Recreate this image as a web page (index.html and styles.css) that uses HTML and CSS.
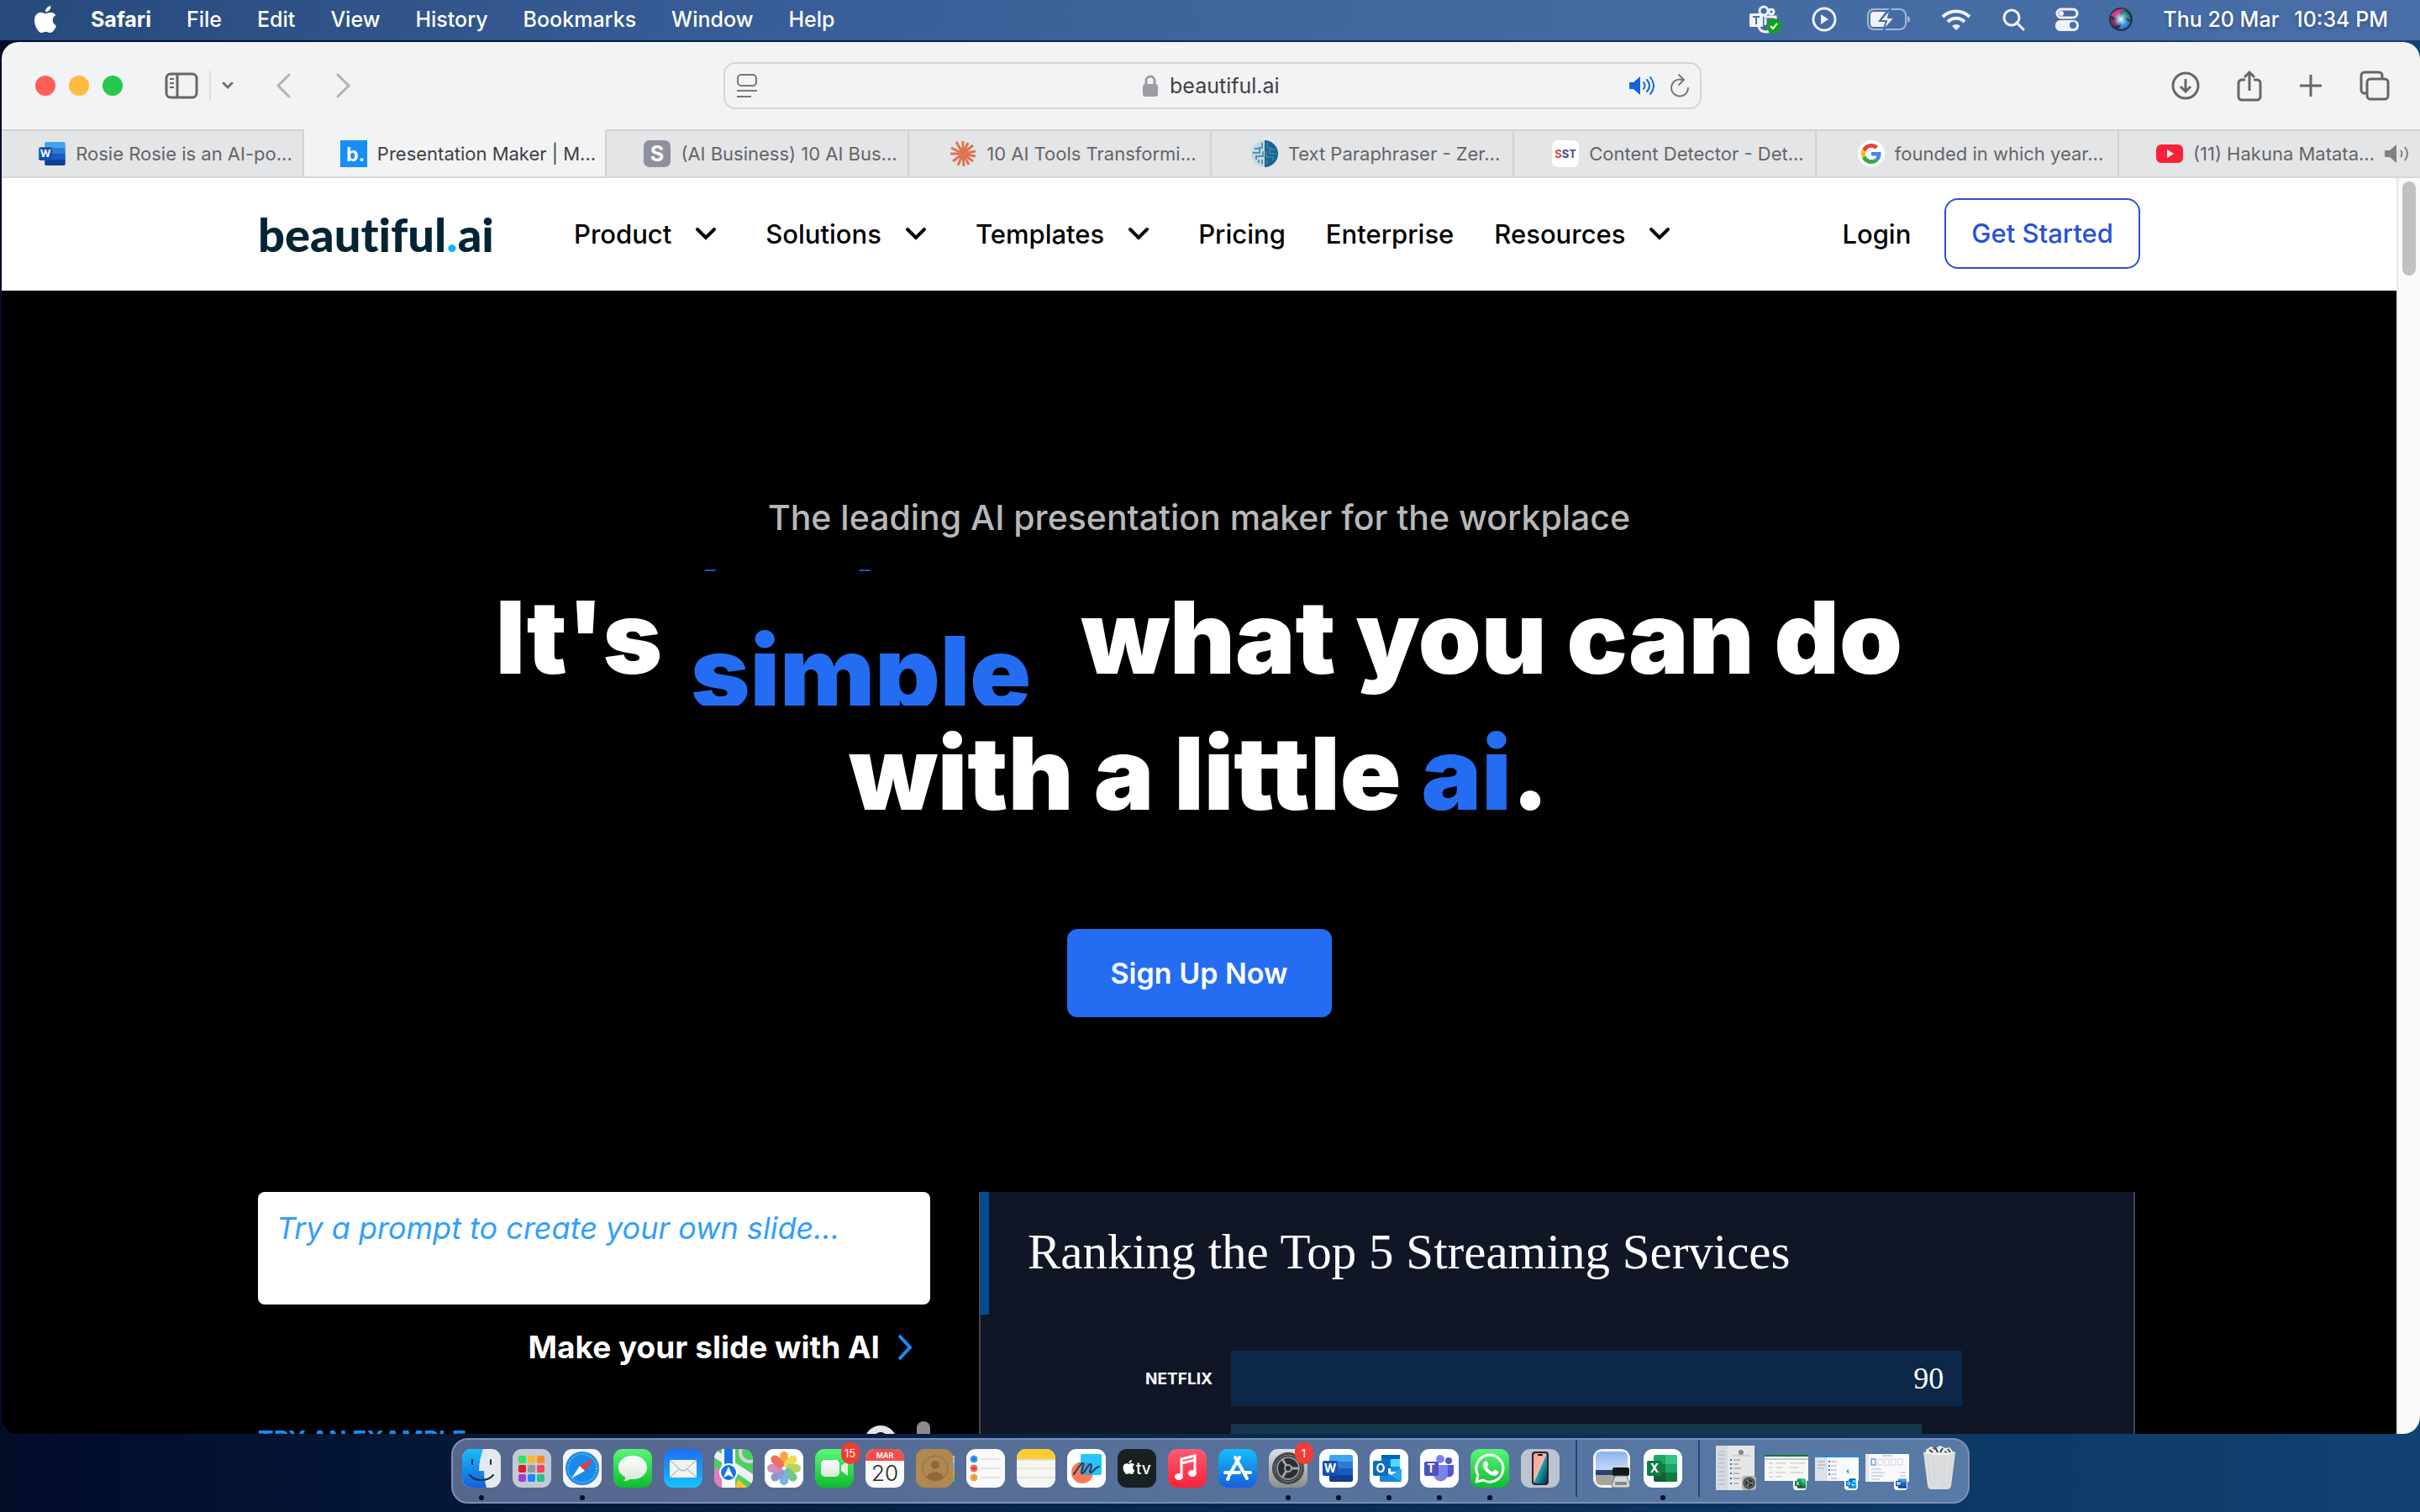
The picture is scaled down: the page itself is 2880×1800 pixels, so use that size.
FILE: index.html
```html
<!DOCTYPE html>
<html lang="en">
<head>
    <meta charset="UTF-8">
    <meta name="viewport" content="width=device-width, initial-scale=1.0">
    <title>Presentation Maker | Beautiful.ai</title>
    <link rel="stylesheet" href="styles.css">
</head>
<body>

    <!-- gradients for the dock icons -->
    <svg class="defs" aria-hidden="true">
        <defs>
            <linearGradient id="gGreen" x1="0" y1="0" x2="0" y2="1"><stop offset="0" stop-color="#5cf67a"/><stop offset="1" stop-color="#0cbd2c"/></linearGradient>
            <linearGradient id="gBlue" x1="0" y1="0" x2="0" y2="1"><stop offset="0" stop-color="#1c6df2"/><stop offset="1" stop-color="#17c3fb"/></linearGradient>
            <linearGradient id="gStore" x1="0" y1="0" x2="0" y2="1"><stop offset="0" stop-color="#16bdfb"/><stop offset="1" stop-color="#1560dc"/></linearGradient>
            <linearGradient id="gRed" x1="0" y1="0" x2="0" y2="1"><stop offset="0" stop-color="#fb5c74"/><stop offset="1" stop-color="#fa2139"/></linearGradient>
            <linearGradient id="gGrey" x1="0" y1="0" x2="0" y2="1"><stop offset="0" stop-color="#d8e2e6"/><stop offset="1" stop-color="#8c8c8c"/></linearGradient>
            <linearGradient id="gWhite" x1="0" y1="0" x2="0" y2="1"><stop offset="0" stop-color="#ffffff"/><stop offset="1" stop-color="#d9e6d9"/></linearGradient>
            <linearGradient id="gPhone" x1="0" y1="0" x2="1" y2="1"><stop offset="0" stop-color="#ff9c95"/><stop offset=".5" stop-color="#f6b8a8"/><stop offset=".51" stop-color="#16a6b8"/><stop offset="1" stop-color="#07303f"/></linearGradient>
            <linearGradient id="gSky" x1="0" y1="0" x2="0" y2="1"><stop offset="0" stop-color="#8cb3f0"/><stop offset="1" stop-color="#c5d8f5"/></linearGradient>
            <radialGradient id="gSiri"><stop offset="0" stop-color="#ffffff"/><stop offset=".3" stop-color="#9fd4f5"/><stop offset="1" stop-color="#9fd4f5" stop-opacity="0"/></radialGradient>
            <clipPath id="tile"><rect width="46" height="46" rx="11"/></clipPath>
        </defs>
    </svg>
    <!-- shared icon shapes -->
    <svg class="symbols" aria-hidden="true">
        <symbol id="apple" viewBox="0 0 24 24"><path d="M12.152 6.896c-.948 0-2.415-1.078-3.96-1.04-2.04.027-3.91 1.183-4.961 3.014-2.117 3.675-.546 9.103 1.519 12.09 1.013 1.454 2.208 3.09 3.792 3.039 1.52-.065 2.09-.987 3.935-.987 1.831 0 2.35.987 3.96.948 1.637-.026 2.676-1.48 3.676-2.948 1.156-1.688 1.636-3.325 1.662-3.415-.039-.013-3.182-1.221-3.22-4.857-.026-3.04 2.48-4.494 2.597-4.559-1.429-2.09-3.623-2.324-4.39-2.376-2-.156-3.675 1.09-4.61 1.09zM15.53 3.83c.843-1.012 1.4-2.427 1.245-3.83-1.207.052-2.662.805-3.532 1.818-.78.896-1.454 2.338-1.273 3.714 1.338.104 2.715-.688 3.559-1.701"/></symbol>
        <symbol id="chevron" viewBox="0 0 26 16"><path d="M3 3l10 10L23 3" fill="none" stroke="#000" stroke-width="4" stroke-linecap="round"/></symbol>
        <symbol id="word" viewBox="0 0 36 32">
            <path d="M10 0h24a2 2 0 0 1 2 2v6H8V2a2 2 0 0 1 2-2z" fill="#41a5ee"/><path d="M8 8h28v8H8z" fill="#2b7cd3"/><path d="M8 16h28v8H8z" fill="#185abd"/><path d="M8 24h28v6a2 2 0 0 1-2 2H10a2 2 0 0 1-2-2z" fill="#103f91"/>
            <rect y="7" width="18" height="18" rx="2" fill="#1450b0"/><text x="9" y="21" class="office-letter">W</text>
        </symbol>
        <symbol id="excel" viewBox="0 0 36 32">
            <path d="M10 0h12v11H8V2a2 2 0 0 1 2-2z" fill="#21a366"/><path d="M22 0h12a2 2 0 0 1 2 2v9H22z" fill="#33c481"/><path d="M8 11h14v10H8z" fill="#107c41"/><path d="M22 11h14v10H22z" fill="#21a366"/><path d="M8 21h28v9a2 2 0 0 1-2 2H10a2 2 0 0 1-2-2z" fill="#185c37"/><path d="M22 21h14v9a2 2 0 0 1-2 2H22z" fill="#107c41"/>
            <rect y="7" width="18" height="18" rx="2" fill="#107c41"/><text x="9" y="21" class="office-letter">X</text>
        </symbol>
        <symbol id="outlook" viewBox="0 0 36 32">
            <path d="M10 0h22v16H10z" fill="#0364b8"/><path d="M10 5h11v9H10z" fill="#0078d4"/><path d="M21 5h11v9H21z" fill="#50d9ff"/><path d="M21 14h11v6H21z" fill="#1490df"/><path d="M8 16l14 8 12-8v14a2 2 0 0 1-2 2H10a2 2 0 0 1-2-2z" fill="#28a8ea"/><path d="M8 17l26 15H10a2 2 0 0 1-2-2z" fill="#1688d4"/>
            <rect y="7" width="18" height="18" rx="2" fill="#0f6cbd"/><text x="9" y="21" class="office-letter">O</text>
        </symbol>
        <symbol id="gear" viewBox="0 0 40 40">
            <circle cx="20" cy="20" r="19" fill="#2b2e30"/><circle cx="20" cy="20" r="16" fill="none" stroke="#8f9496" stroke-width="1"/><circle cx="20" cy="20" r="18" fill="none" stroke="#a2a6a8" stroke-width="1" stroke-dasharray="1 1"/><circle cx="20" cy="20" r="13" fill="none" stroke="#8f9496" stroke-width="2"/><circle cx="20" cy="20" r="4" fill="#2b2e30" stroke="#a2a6a8" stroke-width="2"/><path d="M24 20h9M18 17l-5-8M18 23l-5 8" stroke="#a2a6a8" stroke-width="3"/>
        </symbol>
    </svg>

    <header class="menubar">
        <nav class="menus">
            <svg class="apple" width="32" height="32"><use href="#apple"/></svg>
            <button class="app-name">Safari</button>
            <button>File</button>
            <button>Edit</button>
            <button>View</button>
            <button>History</button>
            <button>Bookmarks</button>
            <button>Window</button>
            <button>Help</button>
        </nav>
        <div class="status">
            <svg width="38" height="34" viewBox="0 0 38 34">
                <g fill="none" stroke="#f0f2f7" stroke-width="3"><circle cx="17" cy="7" r="5"/><circle cx="26" cy="8" r="3"/><path d="M17 14h14v8M11 25c1 8 12 9 15 3"/></g>
                <rect y="10" width="16" height="16" rx="1" fill="#f0f2f7"/><path d="M4 14h8M8 14v9" stroke="#496ea8" stroke-width="2"/>
                <path d="M19 16v8" stroke="#f0f2f7" stroke-width="3"/><circle cx="29" cy="25" r="9" fill="#159f1f"/><path d="M25 25l3 3 5-6" fill="none" stroke="#fff" stroke-width="2"/>
            </svg>
            <svg width="30" height="30" viewBox="0 0 30 30"><circle cx="15" cy="15" r="13" fill="none" stroke="#f0f2f7" stroke-width="3"/><path d="M11 9v12l9-6z" fill="#f0f2f7"/></svg>
            <svg width="52" height="28" viewBox="0 0 52 28"><rect x="1" y="2" width="45" height="24" rx="7" fill="none" stroke="#a3b6d5" stroke-width="2"/><path d="M48 10c4 1 4 7 0 8z" fill="#a3b6d5"/><path d="M8 5h14l-8 11h8l-2 7H8a4 4 0 0 1-4-4V9a4 4 0 0 1 4-4z" fill="#f0f2f7"/><path d="M28 1L15 16h8l-4 12 14-16h-8z" fill="#f0f2f7" stroke="#496ea8" stroke-width="2"/></svg>
            <svg width="36" height="26" viewBox="0 0 36 26"><g fill="none" stroke="#f0f2f7" stroke-width="4"><path d="M2 10a23 23 0 0 1 32 0"/><path d="M8 16a14 14 0 0 1 20 0"/></g><path d="M18 26l-5-5a7 7 0 0 1 10 0z" fill="#f0f2f7"/></svg>
            <svg width="28" height="28" viewBox="0 0 28 28"><circle cx="12" cy="12" r="9" fill="none" stroke="#f0f2f7" stroke-width="3"/><path d="M18 18l8 8" stroke="#f0f2f7" stroke-width="3" stroke-linecap="round"/></svg>
            <svg width="28" height="28" viewBox="0 0 28 28"><rect x="2" y="2" width="24" height="10" rx="5" fill="none" stroke="#f0f2f7" stroke-width="3"/><circle cx="7" cy="7" r="3" fill="#f0f2f7"/><rect y="15" width="28" height="13" rx="6" fill="#f0f2f7"/><circle cx="21" cy="21" r="4" fill="#496ea8"/></svg>
            <svg width="28" height="28" viewBox="0 0 28 28"><circle cx="14" cy="14" r="14" fill="#27324f"/><path d="M2 10c3-8 13-10 18-7-8 0-7 8-6 11z" fill="#d23a76"/><path d="M16 3c8 2 10 9 9 13-3-5-8-6-11-2z" fill="#1d8f79"/><path d="M25 17c-2 7-9 10-14 8 4-2 4-7 3-11z" fill="#2a86dc"/><path d="M2 12c2 4 8 4 12 2-1 4-4 9-7 8-4-2-6-6-5-10z" fill="#8d2a58"/><circle cx="14" cy="14" r="9" fill="url(#gSiri)"/></svg>
            <time class="clock"><span>Thu 20 Mar</span><span>10:34 PM</span></time>
        </div>
    </header>

    <main class="window">
        <div class="toolbar">
            <div class="tools-left">
                <div class="lights"><button class="close" aria-label="Close"></button><button class="minimise" aria-label="Minimise"></button><button class="zoom" aria-label="Zoom"></button></div>
                <div class="sidebar-tools">
                    <button aria-label="Sidebar"><svg width="40" height="32" viewBox="0 0 40 32" fill="none" stroke="#656668" stroke-width="3"><rect x="2" y="2" width="36" height="28" rx="5"/><path d="M15 2v28"/><path d="M6 8h5M6 13h5M6 18h5" stroke-width="2"/></svg></button>
                    <span class="divider"></span>
                    <button aria-label="Tab groups"><svg width="14" height="10" viewBox="0 0 14 10"><path d="M2 2l5 5 5-5" fill="none" stroke="#6f7073" stroke-width="3" stroke-linecap="round"/></svg></button>
                </div>
                <div class="history-tools">
                    <button aria-label="Back"><svg width="18" height="30" viewBox="0 0 18 30"><path d="M16 2L3 15l13 13" fill="none" stroke="#b1b3b5" stroke-width="3" stroke-linecap="round"/></svg></button>
                    <button aria-label="Forward"><svg width="18" height="30" viewBox="0 0 18 30"><path d="M2 2l13 13L2 28" fill="none" stroke="#b1b3b5" stroke-width="3" stroke-linecap="round"/></svg></button>
                </div>
            </div>
            <div class="address">
                <svg width="24" height="28" viewBox="0 0 24 28" fill="none" stroke="#77787a"><rect x="1" y="1" width="22" height="13" rx="4" stroke-width="2"/><path d="M0 20h24M0 27h17" stroke-width="2"/></svg>
                <label class="url">
                    <svg width="18" height="26" viewBox="0 0 18 26"><path d="M4 12V7a5 5 0 0 1 10 0v5" fill="none" stroke="#9c9da0" stroke-width="3"/><rect y="11" width="18" height="15" rx="3" fill="#9c9da0"/></svg>
                    <input type="text" value="beautiful.ai" aria-label="Address">
                </label>
                <div class="address-tools">
                    <button aria-label="Mute tab"><svg width="30" height="24" viewBox="0 0 30 24"><path d="M0 8h5l8-7v22l-8-7H0z" fill="#1264d8"/><path d="M17 8q3 4 0 8M21 5q6 7 0 14M25 2q8 10 0 20" fill="none" stroke="#1264d8" stroke-width="2" stroke-linecap="round"/></svg></button>
                    <button aria-label="Reload"><svg width="24" height="28" viewBox="0 0 24 28" fill="none" stroke="#77787a" stroke-width="2" stroke-linecap="round"><path d="M15 7a10 10 0 1 0 7 10M11 1l6 6-6 6"/></svg></button>
                </div>
            </div>
            <div class="tools-right">
                <button aria-label="Downloads"><svg width="34" height="34" viewBox="0 0 34 34" fill="none" stroke="#656668" stroke-width="3"><circle cx="17" cy="17" r="15"/><path d="M17 9v15M11 18l6 6 6-6"/></svg></button>
                <button aria-label="Share"><svg width="30" height="38" viewBox="0 0 30 38" fill="none" stroke="#656668" stroke-width="3"><path d="M10 12H6a4 4 0 0 0-4 4v16a4 4 0 0 0 4 4h18a4 4 0 0 0 4-4V16a4 4 0 0 0-4-4h-4M15 25V3M9 9l6-6 6 6"/></svg></button>
                <button aria-label="New tab"><svg width="28" height="28" viewBox="0 0 28 28"><path d="M14 1v26M1 14h26" stroke="#656668" stroke-width="3"/></svg></button>
                <button aria-label="Tab overview"><svg width="36" height="36" viewBox="0 0 36 36" fill="none" stroke="#656668" stroke-width="3"><rect x="9" y="10" width="25" height="24" rx="4"/><path d="M9 27H6a4 4 0 0 1-4-4V6a4 4 0 0 1 4-4h17a4 4 0 0 1 4 4v4"/></svg></button>
            </div>
        </div>

        <div class="tabs">
            <button class="tab"><svg width="32" height="28"><use href="#word"/></svg>Rosie Rosie is an AI-po...</button>
            <button class="tab active"><svg width="32" height="32" viewBox="0 0 32 32"><rect width="32" height="32" fill="#158ff7"/><text x="7" y="25" class="fav-b">b.</text></svg>Presentation Maker | M...</button>
            <button class="tab"><svg width="32" height="32" viewBox="0 0 32 32"><rect width="32" height="32" rx="7" fill="#8f8f9e"/><text x="16" y="25" class="fav-s">S</text></svg>(AI Business) 10 AI Bus...</button>
            <button class="tab"><svg width="32" height="32" viewBox="0 0 32 32"><path d="M16 16L16 1M16 16l6-13M16 16L28 6M16 16l15-3M16 16l15 3M16 16l12 9M16 16l7 13M16 16l1 15M16 16l-6 14M16 16L4 25M16 16H1M16 16L2 9M16 16L8 2" stroke="#de7452" stroke-width="3"/></svg>10 AI Tools Transformi...</button>
            <button class="tab"><svg width="32" height="32" viewBox="0 0 32 32"><path d="M16 0a16 16 0 0 0 0 32z" fill="#c3d9e4"/><path d="M16 0a16 16 0 0 1 0 32z" fill="#18658d"/><path d="M13 3v6H8M4 10h6v5H2M14 13v6H6v4M13 23v5M9 27v-4" fill="none" stroke="#5590ad" stroke-width="2"/><path d="M19 3v6h5M29 11h-7v5h8M18 13v7h8v4M19 24v5" fill="none" stroke="#5d9bb8"/></svg>Text Paraphraser - Zer...</button>
            <button class="tab"><svg width="32" height="32" viewBox="0 0 32 32"><rect width="32" height="32" rx="7" fill="#fff"/><text x="16" y="21" class="fav-sst"><tspan fill="#c8504a">S</tspan><tspan fill="#454a8c">ST</tspan></text></svg>Content Detector - Det...</button>
            <button class="tab"><svg width="32" height="32" viewBox="0 0 32 32"><circle cx="16" cy="16" r="16" fill="#fff"/><svg x="4" y="4" width="24" height="24" viewBox="0 0 48 48"><path fill="#EA4335" d="M24 9.5c3.54 0 6.71 1.22 9.21 3.6l6.85-6.85C35.9 2.38 30.47 0 24 0 14.62 0 6.51 5.38 2.56 13.22l7.98 6.19C12.43 13.72 17.74 9.5 24 9.5z"/><path fill="#4285F4" d="M46.98 24.55c0-1.57-.15-3.09-.38-4.55H24v9.02h12.94c-.58 2.96-2.26 5.48-4.78 7.18l7.73 6c4.51-4.18 7.09-10.36 7.09-17.65z"/><path fill="#FBBC05" d="M10.53 28.59c-.48-1.45-.76-2.99-.76-4.59s.27-3.14.76-4.59l-7.98-6.19C.92 16.46 0 20.12 0 24c0 3.88.92 7.54 2.56 10.78l7.97-6.19z"/><path fill="#34A853" d="M24 48c6.48 0 11.93-2.13 15.89-5.81l-7.73-6c-2.15 1.45-4.92 2.3-8.16 2.3-6.26 0-11.57-4.22-13.47-9.91l-7.98 6.19C6.51 42.62 14.62 48 24 48z"/></svg></svg>founded in which year...</button>
            <button class="tab"><svg width="32" height="22" viewBox="0 0 32 22"><rect width="32" height="22" rx="6" fill="#fc2137"/><path d="M13 6v10l8-5z" fill="#fff"/></svg>(11) Hakuna Matata...<svg width="30" height="22" viewBox="0 0 30 22"><path d="M0 7h6l8-7v22l-8-7H0z" fill="#808183"/><path d="M19 7q3 4 0 8M24 3q6 8 0 16" fill="none" stroke="#808183" stroke-width="2"/></svg></button>
        </div>

        <div class="viewport">
            <div class="page">
                <header class="site-header">
                    <div class="container nav-row">
                        <a class="logo" href="#">beautiful<span>.</span>ai</a>
                        <nav class="site-nav">
                            <button class="dropdown">Product <svg width="26" height="16"><use href="#chevron"/></svg></button>
                            <button class="dropdown">Solutions <svg width="26" height="16"><use href="#chevron"/></svg></button>
                            <button class="dropdown">Templates <svg width="26" height="16"><use href="#chevron"/></svg></button>
                            <a href="#">Pricing</a>
                            <a href="#">Enterprise</a>
                            <button class="dropdown">Resources <svg width="26" height="16"><use href="#chevron"/></svg></button>
                        </nav>
                        <div class="account">
                            <a href="#">Login</a>
                            <a class="get-started" href="#">Get Started</a>
                        </div>
                    </div>
                </header>

                <section class="hero">
                    <p class="tagline">The leading AI presentation maker for the workplace</p>
                    <h1>It's <span class="rotator"><i class="tail first"></i><i class="tail second"></i>simple</span> what you can do<br>with a little <span class="accent">ai</span>.</h1>
                    <button class="signup">Sign Up Now</button>
                </section>

                <section class="container demo">
                    <div class="prompt">
                        <textarea placeholder="Try a prompt to create your own slide..." aria-label="Slide prompt"></textarea>
                        <button class="make">Make your slide with AI <svg width="20" height="32" viewBox="0 0 20 32"><path d="M3 2l13 14L3 30" fill="none" stroke="#158ff7" stroke-width="4"/></svg></button>
                        <div class="examples">
                            <span class="examples-title">TRY AN EXAMPLE</span>
                            <svg class="refresh" width="38" height="38" viewBox="0 0 38 38"><circle cx="19" cy="19" r="19" fill="#e6e6e6"/><circle cx="19" cy="16" r="8" fill="#000"/></svg>
                            <span class="examples-scroll"></span>
                        </div>
                    </div>
                    <div class="slide">
                        <h2>Ranking the Top 5 Streaming Services</h2>
                        <div class="chart">
                            <span class="label">NETFLIX</span>
                            <div class="track"><div class="bar" style="width: 90%">90</div></div>
                            <span class="label"></span>
                            <div class="track"><div class="bar teal" style="width: 85%"></div></div>
                        </div>
                    </div>
                </section>
            </div>
            <div class="scrollbar"><div class="thumb"></div></div>
        </div>
    </main>

    <footer class="dock">
        <button class="app running" aria-label="Finder"><svg viewBox="0 0 46 46"><g clip-path="url(#tile)"><rect width="46" height="46" fill="#e4e9f0"/><path d="M0 0h25c-3 8-5 17-5 26h6c0 7 1 14 3 20H0z" fill="url(#gStore)"/></g><path d="M12 13v5M34 13v5M9 31c7 8 21 8 28 0" fill="none" stroke="#15304f" stroke-width="2" stroke-linecap="round"/></svg></button>
        <button class="app" aria-label="Launchpad"><svg viewBox="0 0 46 46"><rect width="46" height="46" rx="11" fill="#c4c9d6"/><g><rect x="7" y="8" width="9" height="9" rx="2" fill="#30e45a"/><rect x="18" y="8" width="9" height="9" rx="2" fill="#fbb72b"/><rect x="29" y="8" width="9" height="9" rx="2" fill="#fa8b1f"/><rect x="7" y="19" width="9" height="9" rx="2" fill="#da1f2b"/><rect x="18" y="19" width="9" height="9" rx="2" fill="#93979d"/><rect x="29" y="19" width="9" height="9" rx="2" fill="#fb3f5c"/><rect x="7" y="30" width="9" height="9" rx="2" fill="#9d40d3"/><rect x="18" y="30" width="9" height="9" rx="2" fill="#128bf5"/><rect x="29" y="30" width="9" height="9" rx="2" fill="#22c08c"/></g></svg></button>
        <button class="app running" aria-label="Safari"><svg viewBox="0 0 46 46"><rect width="46" height="46" rx="11" fill="#f5f5f5"/><circle cx="23" cy="23" r="20" fill="#1a8ae8"/><circle cx="23" cy="23" r="17" fill="none" stroke="#8dc8f7" stroke-width="2" stroke-dasharray="1 2"/><path d="M37 11L20 20l6 6z" fill="#ee3b34"/><path d="M10 35l10-15 6 6z" fill="#f4f6f8"/></svg></button>
        <button class="app" aria-label="Messages"><svg viewBox="0 0 46 46"><rect width="46" height="46" rx="11" fill="url(#gGreen)"/><path d="M23 8c10 0 17 6 17 14s-7 14-17 14h-4c-2 2-4 2-7 2 2-1 2-3 2-5-5-2-8-6-8-11C6 14 13 8 23 8z" fill="url(#gWhite)"/></svg></button>
        <button class="app" aria-label="Mail"><svg viewBox="0 0 46 46"><rect width="46" height="46" rx="11" fill="url(#gBlue)"/><rect x="7" y="13" width="32" height="21" rx="2" fill="#f0f2f3"/><path d="M8 14l12 11q3 2 6 0l12-11M8 33l10-9M38 33l-10-9" fill="none" stroke="#9a9fa3" stroke-width="1"/></svg></button>
        <button class="app" aria-label="Maps"><svg viewBox="0 0 46 46"><g clip-path="url(#tile)"><rect width="46" height="46" fill="#4fce63"/><path d="M0 10l46 32v-12L0 0z" fill="#eef0f2"/><path d="M0 24h15v22H0z" fill="#e77bbf"/><path d="M9 0h16v46H9z" fill="#fff"/><path d="M12 0h10v28H12z" fill="#1672ea"/><path d="M25 46l3-10 12 10z" fill="#fcc42c"/><circle cx="42" cy="4" r="11" fill="none" stroke="#d2d6d9" stroke-width="4"/></g><circle cx="17" cy="28" r="11" fill="#fff"/><circle cx="17" cy="28" r="9" fill="#1672ea"/><path d="M17 21l6 13-6-3-6 3z" fill="#fff"/></svg></button>
        <button class="app" aria-label="Photos"><svg viewBox="0 0 46 46"><rect width="46" height="46" rx="11" fill="#fff"/><g opacity=".85"><rect x="18" y="3" width="10" height="18" rx="5" fill="#f79a1e"/><rect x="18" y="3" width="10" height="18" rx="5" fill="#efd533" transform="rotate(45 23 23)"/><rect x="18" y="3" width="10" height="18" rx="5" fill="#a9cf46" transform="rotate(90 23 23)"/><rect x="18" y="3" width="10" height="18" rx="5" fill="#5cba79" transform="rotate(135 23 23)"/><rect x="18" y="3" width="10" height="18" rx="5" fill="#5ea9d8" transform="rotate(180 23 23)"/><rect x="18" y="3" width="10" height="18" rx="5" fill="#7d84c4" transform="rotate(225 23 23)"/><rect x="18" y="3" width="10" height="18" rx="5" fill="#c77bb2" transform="rotate(270 23 23)"/><rect x="18" y="3" width="10" height="18" rx="5" fill="#ee5649" transform="rotate(315 23 23)"/></g></svg></button>
        <button class="app" aria-label="FaceTime"><svg viewBox="0 0 46 46"><rect width="46" height="46" rx="11" fill="url(#gGreen)"/><rect x="7" y="13" width="22" height="20" rx="5" fill="url(#gWhite)"/><path d="M31 20l8-6v18l-8-6z" fill="#dff2e0"/></svg><span class="badge">15</span></button>
        <button class="app" aria-label="Calendar"><svg viewBox="0 0 46 46"><g clip-path="url(#tile)"><rect width="46" height="46" fill="#fafafa"/><rect width="46" height="14" fill="#f2504a"/></g><text x="23" y="11" class="cal-month">MAR</text><text x="23" y="38" class="cal-day">20</text></svg></button>
        <button class="app" aria-label="Contacts"><svg viewBox="0 0 46 46"><path d="M40 8h6v8h-6z" fill="#b9bcc0"/><path d="M40 16h6v8h-6z" fill="#59b7e8"/><path d="M40 24h6v8h-6z" fill="#f29423"/><path d="M40 32h6v7h-6z" fill="#44c767"/><rect width="44" height="46" rx="10" fill="#b08850"/><g fill="none" stroke="#8e6a3a" stroke-width="1"><circle cx="23" cy="23" r="15"/></g><circle cx="23" cy="19" r="5" fill="#8e6a3a"/><path d="M13 34c2-9 18-9 20 0-6 5-14 5-20 0z" fill="#8e6a3a"/></svg></button>
        <button class="app" aria-label="Reminders"><svg viewBox="0 0 46 46"><rect width="46" height="46" rx="11" fill="#fafafa"/><g stroke-width="1" fill="none"><circle cx="9" cy="12" r="4" stroke="#1d7cf2"/><circle cx="9" cy="23" r="4" stroke="#ee4038"/><circle cx="9" cy="34" r="4" stroke="#ef932b"/></g><circle cx="9" cy="12" r="3" fill="#1d7cf2"/><circle cx="9" cy="23" r="3" fill="#ee4038"/><circle cx="9" cy="34" r="3" fill="#ef932b"/><path d="M17 12h24M17 23h24M17 34h24" stroke="#cfcfcf" stroke-width="1"/></svg></button>
        <button class="app" aria-label="Notes"><svg viewBox="0 0 46 46"><g clip-path="url(#tile)"><rect width="46" height="46" fill="#f6f5f1"/><rect width="46" height="12" fill="#fbcc34"/></g><path d="M0 13h46" stroke="#aaa69a" stroke-width="1" stroke-dasharray="1 1"/><path d="M0 23h46M0 34h46" stroke="#d8d7d3"/></svg></button>
        <button class="app" aria-label="Freeform"><svg viewBox="0 0 46 46"><rect width="46" height="46" rx="11" fill="#fff"/><circle cx="18" cy="28" r="13" fill="#fb7a55"/><rect x="16" y="6" width="25" height="25" rx="2" fill="#28c5f6"/><path d="M16 18c6-4 14-2 15 5l-1 8H16z" fill="#5a97c4"/><path d="M8 30c4-6 9-14 11-13s-4 12-1 12 7-12 10-11-3 10 0 10 6-7 10-7" fill="none" stroke="#123b68" stroke-width="2" stroke-linecap="round"/></svg></button>
        <button class="app" aria-label="TV"><svg viewBox="0 0 46 46"><rect width="46" height="46" rx="11" fill="#18211f"/><svg x="5" y="13" width="17" height="17" fill="#fff"><use href="#apple"/></svg><text x="22" y="30" class="tv">tv</text></svg></button>
        <button class="app" aria-label="Music"><svg viewBox="0 0 46 46"><rect width="46" height="46" rx="11" fill="url(#gRed)"/><path d="M16 32V12l16-4v20M16 17l16-4" fill="none" stroke="#fff" stroke-width="3"/><ellipse cx="13" cy="33" rx="5" ry="4" fill="#fff"/><ellipse cx="29" cy="29" rx="5" ry="4" fill="#fff"/></svg></button>
        <button class="app" aria-label="App Store"><svg viewBox="0 0 46 46"><rect width="46" height="46" rx="11" fill="url(#gStore)"/><path d="M25 10L13 31M20 10l14 25M8 28h17M32 28h6M12 34l-1 2" stroke="#fff" stroke-width="4" stroke-linecap="round"/></svg></button>
        <button class="app running" aria-label="System Settings"><svg viewBox="0 0 46 46"><rect width="46" height="46" rx="11" fill="url(#gGrey)"/><svg x="3" y="3" width="40" height="40"><use href="#gear"/></svg></svg><span class="badge">1</span></button>
        <button class="app running" aria-label="Word"><svg viewBox="0 0 46 46"><rect width="46" height="46" rx="11" fill="#fff"/><svg x="4" y="7" width="36" height="32"><use href="#word"/></svg></svg></button>
        <button class="app running" aria-label="Outlook"><svg viewBox="0 0 46 46"><rect width="46" height="46" rx="11" fill="#fff"/><svg x="4" y="7" width="36" height="32"><use href="#outlook"/></svg></svg></button>
        <button class="app running" aria-label="Teams"><svg viewBox="0 0 46 46"><rect width="46" height="46" rx="11" fill="#fff"/><circle cx="24" cy="12" r="5" fill="#7b83eb"/><circle cx="34" cy="14" r="4" fill="#5059c9"/><path d="M30 19h10v9a6 6 0 0 1-10 4z" fill="#5059c9"/><path d="M16 19h17v11a8 8 0 0 1-17 0z" fill="#7b83eb"/><rect x="5" y="15" width="17" height="17" rx="2" fill="#4b53bc"/><text x="13" y="28" class="office-letter">T</text></svg></button>
        <button class="app running" aria-label="WhatsApp"><svg viewBox="0 0 46 46"><rect width="46" height="46" rx="11" fill="url(#gGreen)"/><path d="M7 39l2-8a16 16 0 1 1 6 6z" fill="none" stroke="#fff" stroke-width="3" stroke-linejoin="round"/><path d="M17 15c2-2 3 0 4 3 1 2-2 2-1 4 2 3 4 4 6 5 2 0 2-3 4-2 4 2 4 2 3 4-3 5-9 3-13-1-5-4-7-9-3-13z" fill="#fff"/></svg></button>
        <button class="app" aria-label="iPhone Mirroring"><svg viewBox="0 0 46 46"><rect width="46" height="46" rx="11" fill="#bcc4d2"/><rect x="13" y="3" width="20" height="40" rx="4" fill="#2c2425"/><rect x="15" y="5" width="16" height="36" rx="3" fill="url(#gPhone)"/><rect x="20" y="6" width="6" height="2" rx="1" fill="#111"/></svg></button>
        <span class="separator"></span>
        <button class="app" aria-label="Preview"><svg viewBox="0 0 46 46"><rect width="44" height="46" rx="11" fill="#f4f6fa"/><path d="M3 9a6 6 0 0 1 6-6h26a6 6 0 0 1 6 6v16H3z" fill="url(#gSky)"/><path d="M3 25h38v6H3z" fill="#2c4272"/><path d="M3 31h38v6a6 6 0 0 1-6 6H9a6 6 0 0 1-6-6z" fill="#a9a39b"/><rect x="23" y="22" width="20" height="10" rx="2" fill="#15171a"/><path d="M26 32h14l4 11a3 3 0 0 1-3 3H25a3 3 0 0 1-3-3z" fill="#d4d8da" stroke="#6d7276"/><path d="M26 39h14v4H26z" fill="#858a8d"/></svg></button>
        <button class="app running" aria-label="Excel"><svg viewBox="0 0 46 46"><rect width="46" height="46" rx="11" fill="#fff"/><svg x="4" y="7" width="36" height="32"><use href="#excel"/></svg></svg></button>
        <span class="separator"></span>
        <button class="app thumb-window" aria-label="Settings window"><svg width="50" height="56" viewBox="0 0 50 56"><rect y="1" width="46" height="53" fill="#e6e6e6"/><rect y="1" width="14" height="53" fill="#d9dadc"/><path d="M3 8h8M3 12h8M3 17h8M3 22h8M3 27h8M3 32h8M3 37h8M3 42h8M3 47h8" stroke="#9db5d2" stroke-width="1"/><circle cx="30" cy="9" r="3" fill="#84878b"/><path d="M20 13h21" stroke="#b8b8b8"/><path d="M17 18h2M17 23h2M17 28h2M17 34h2M17 40h2M17 46h2" stroke="#2770d8" stroke-width="2"/><path d="M21 18h8M21 23h6M21 28h9M21 34h7M21 40h8M21 46h6" stroke="#8a8a8a"/><rect x="31" y="37" width="17" height="17" rx="4" fill="#b2b2b2"/><svg x="32" y="38" width="15" height="15"><use href="#gear"/></svg></svg></button>
        <button class="app thumb-window" aria-label="Excel window"><svg width="52" height="56" viewBox="0 0 52 56"><rect y="12" width="52" height="31" fill="#f6f7f5"/><rect y="12" width="52" height="2" fill="#16753c"/><path d="M0 17h52" stroke="#b9cfc1" stroke-width="2"/><path d="M5 22h5M13 22h12M30 22h18M5 27h5M13 27h8M30 27h10M5 33h5M13 33h12M30 33h16M5 38h5M13 38h8" stroke="#c1c1c1"/><rect x="34" y="38" width="16" height="16" rx="4" fill="#fff"/><svg x="36" y="40" width="13" height="12"><use href="#excel"/></svg></svg></button>
        <button class="app thumb-window" aria-label="Outlook window"><svg width="52" height="56" viewBox="0 0 52 56"><rect y="12" width="52" height="31" fill="#f7f9fb"/><rect y="12" width="52" height="3" fill="#2f86d6"/><rect y="15" width="15" height="28" fill="#dde2e8"/><path d="M3 20h9M3 24h9M3 28h7M19 20h7M19 25h7M19 30h7M19 35h7M19 40h7" stroke="#9ea9b5"/><path d="M16 20h2M16 25h2M16 30h2M16 35h2" stroke="#2f86d6" stroke-width="2"/><path d="M37 31l3-2v6z" fill="#28a8ea"/><rect x="35" y="38" width="16" height="16" rx="4" fill="#fff"/><svg x="37" y="40" width="13" height="12"><use href="#outlook"/></svg></svg></button>
        <button class="app thumb-window" aria-label="Word window"><svg width="52" height="56" viewBox="0 0 52 56"><rect y="11" width="52" height="33" fill="#f9f9fb"/><rect y="11" width="4" height="33" fill="#e1e4ec"/><path d="M7 17h4M20 13h12" stroke="#a9adb5"/><rect x="7" y="17" width="5" height="7" fill="#fff" stroke="#3d78d4"/><rect x="15" y="17" width="5" height="7" fill="#fff" stroke="#ced3dc"/><rect x="23" y="17" width="5" height="7" fill="#fff" stroke="#ced3dc"/><rect x="31" y="17" width="5" height="7" fill="#fff" stroke="#ced3dc"/><rect x="39" y="17" width="5" height="7" fill="#fff" stroke="#ced3dc"/><path d="M7 29h12M7 33h16M7 37h14M7 41h10M41 33h7M41 37h7" stroke="#b3b8c2"/><rect x="34" y="38" width="16" height="16" rx="4" fill="#fff"/><svg x="36" y="40" width="13" height="12"><use href="#word"/></svg></svg></button>
        <button class="app trash" aria-label="Trash"><svg width="40" height="56" viewBox="0 0 40 56"><path d="M4 6l6-4 5 2 6-3 6 3 5-1 5 6-4 5H4z" fill="#e9ebec"/><path d="M8 6l4 3M15 3l3 6M24 4l-3 5M30 5l3 4" stroke="#3d4043" stroke-width="2"/><path d="M12 4l3 1" stroke="#d9463a" stroke-width="2"/><path d="M26 8l3 1" stroke="#3a8b5c" stroke-width="2"/><path d="M1 9q19 5 38 0l-5 40q-1 4-5 4H11q-4 0-5-4z" fill="#dcdddf"/><path d="M6 14l4 34M13 15l2 34M27 15l-2 34M34 14l-4 34" stroke="#d2d4d6"/><path d="M1 9q19 5 38 0" fill="none" stroke="#f7f7f7" stroke-width="1"/></svg></button>
    </footer>

</body>
</html>
```

FILE: styles.css
```css
* {
    box-sizing: border-box;
}
body {
    margin: 0;
    height: 100vh;
    display: flex;
    flex-direction: column;
    overflow: hidden;
    font-family: Inter, "Liberation Sans", sans-serif;
    background: linear-gradient(90deg, #020d28, #08284f 50%, #104273);
}
button {
    font: inherit;
    color: inherit;
    background: none;
    border: none;
    padding: 0;
    cursor: pointer;
}
a {
    color: inherit;
    text-decoration: none;
}
svg {
    display: block;
    flex: none;
}
.defs {
    width: 0;
    height: 0;
    position: absolute;
}
.symbols {
    display: none;
}

/* menu bar */
.menubar {
    display: flex;
    justify-content: space-between;
    align-items: center;
    height: 48px;
    margin-bottom: 2px;
    padding: 0 38px 2px;
    font-size: 25px;
    font-weight: 500;
    color: #fff;
    background: linear-gradient(90deg, #274a7c, #385c96 30%, #42699f 60%, #496ea8);
    text-shadow: 0 2px 4px rgba(0, 0, 0, .3);
}
.menus {
    display: flex;
    align-items: center;
    gap: 42px;
}
.apple {
    fill: #fff;
    margin-right: -4px;
}
.app-name {
    font-weight: 700;
}
.status {
    display: flex;
    align-items: center;
    gap: 36px;
}
.clock {
    display: flex;
    gap: 18px;
}

/* browser window */
.window {
    flex: 1;
    min-height: 0;
    display: flex;
    flex-direction: column;
    margin-left: 2px;
    border-radius: 20px;
    overflow: hidden;
    background: #000;
}
.toolbar {
    flex: none;
    display: grid;
    grid-template-columns: 1fr minmax(0, 1164px) 1fr;
    align-items: center;
    height: 104px;
    padding: 0 36px 0 40px;
    background: #f2f3f5;
}
.tools-left, .tools-right, .lights, .sidebar-tools, .history-tools, .address-tools {
    display: flex;
    align-items: center;
}
.tools-left {
    gap: 50px;
}
.tools-right {
    justify-content: flex-end;
    gap: 44px;
}
.lights {
    gap: 16px;
}
.lights button {
    width: 24px;
    height: 24px;
    border-radius: 50%;
}
.close {
    background: #fe5f57;
}
.minimise {
    background: #febb3f;
}
.zoom {
    background: #28c84c;
}
.sidebar-tools {
    gap: 13px;
}
.divider {
    width: 2px;
    height: 36px;
    background: #dfe0e2;
}
.history-tools {
    gap: 54px;
}
.address {
    display: grid;
    grid-template-columns: 1fr auto 1fr;
    align-items: center;
    height: 56px;
    padding: 0 12px 0 14px;
    border: 2px solid #d5d6d9;
    border-radius: 14px;
}
.url {
    display: flex;
    align-items: center;
    gap: 14px;
}
.url input {
    width: 136px;
    padding: 0;
    border: none;
    background: none;
    font: inherit;
    font-size: 25px;
    color: #3f4042;
}
.address-tools {
    justify-content: flex-end;
    gap: 18px;
}

/* tabs */
.tabs {
    flex: none;
    display: flex;
    height: 58px;
    border-bottom: 2px solid #d7d8da;
    background: #e4e5e7;
}
.tab {
    flex: 1;
    min-width: 0;
    display: flex;
    align-items: center;
    justify-content: center;
    gap: 12px;
    padding-left: 32px;
    border-top: 2px solid #cfd0d2;
    border-right: 2px solid #d0d1d3;
    font-size: 22px;
    color: #646567;
    white-space: nowrap;
}
.tab:last-child {
    border-right: none;
}
.tab.active {
    background: #f2f3f5;
    border-top-color: #f2f3f5;
    color: #404143;
}
.fav-b {
    font-size: 23px;
    font-weight: 700;
    fill: #fff;
}
.fav-s {
    font-size: 25px;
    font-weight: 700;
    text-anchor: middle;
    fill: #fff;
}
.fav-sst {
    font-size: 13px;
    font-weight: 700;
    text-anchor: middle;
}

/* page */
.viewport {
    flex: 1;
    min-height: 0;
    display: flex;
}
.page {
    flex: 1;
    overflow: hidden;
    background: #000;
}
.scrollbar {
    width: 28px;
    padding: 4px 5px;
    border-left: 2px solid #e6e6e6;
    background: #fafafa;
}
.thumb {
    height: 112px;
    border-radius: 8px;
    background: #c1c1c1;
}
.container {
    max-width: 2240px;
    margin: 0 auto;
}
.site-header {
    background: #fff;
    color: #000;
    font-size: 31px;
    font-weight: 500;
}
.nav-row {
    display: flex;
    align-items: center;
    height: 134px;
    padding-bottom: 2px;
}
.logo {
    width: 290px;
    font-family: Lato, sans-serif;
    font-size: 56px;
    font-weight: 900;
    font-variant-ligatures: none;
    color: #022533;
}
.logo span {
    color: #10b3fc;
}
.site-nav {
    display: flex;
    align-items: center;
    gap: 48px;
    margin-left: 86px;
}
.dropdown {
    display: flex;
    align-items: center;
    gap: 28px;
    padding-right: 10px;
}
.account {
    display: flex;
    align-items: center;
    gap: 40px;
    margin-left: auto;
}
.get-started {
    padding: 20px 30px;
    border: 2px solid #2850d8;
    border-radius: 16px;
    line-height: 40px;
    color: #2850d8;
}

.hero {
    display: flex;
    flex-direction: column;
    align-items: center;
    padding: 240px 0 208px;
    text-align: center;
}
.tagline {
    margin: 0 0 32px;
    font-size: 41px;
    font-weight: 500;
    line-height: 60px;
    color: #b8b8b8;
}
h1 {
    margin: 0 0 104px;
    font-size: 120px;
    font-weight: 900;
    line-height: 162px;
    color: #fff;
}
.accent {
    color: #246df3;
}
.rotator {
    display: inline-block;
    position: relative;
    vertical-align: top;
    height: 162px;
    padding-top: 42px;
    margin: 0 36px 0 10px;
    overflow: hidden;
    color: #246df3;
}
.tail {
    position: absolute;
    top: 0;
    width: 14px;
    height: 2px;
    border-radius: 0 0 7px 7px;
    background: #1d56c2;
}
.tail.first {
    left: 16px;
}
.tail.second {
    left: 200px;
}
.signup {
    padding: 0 52px;
    border-radius: 12px;
    background: #246df3;
    font-size: 34px;
    font-weight: 600;
    line-height: 105px;
    color: #fff;
}

/* prompt and slide */
.demo {
    display: flex;
    justify-content: space-between;
    align-items: flex-start;
}
.prompt {
    width: 800px;
    display: flex;
    flex-direction: column;
}
textarea {
    height: 134px;
    padding: 18px 22px;
    border: none;
    border-radius: 8px;
    resize: none;
    background: #fff;
    font-family: inherit;
    font-size: 36px;
    line-height: 50px;
}
textarea::placeholder {
    font-style: italic;
    color: #319ffa;
}
.make {
    display: flex;
    align-items: center;
    align-self: flex-end;
    gap: 20px;
    margin: 24px 20px 61px 0;
    font-size: 37px;
    font-weight: 700;
    line-height: 54px;
    color: #fff;
}
.examples {
    display: flex;
    align-items: flex-start;
}
.examples-title {
    flex: 1;
    padding-top: 6px;
    font-size: 28px;
    font-weight: 700;
    line-height: 32px;
    color: #158ff7;
}
.refresh {
    margin: 5px 24px 0 0;
}
.examples-scroll {
    width: 16px;
    height: 200px;
    border-radius: 8px;
    background: #8c8c8c;
}
.slide {
    width: 1376px;
    min-height: 600px;
    margin-right: 6px;
    border: 2px solid #45464c;
    border-top: none;
    background: linear-gradient(#004c94, #004c94) 0 0 / 10px 146px no-repeat, #101626;
}
h2 {
    margin: 0;
    padding: 36px 0 2px 56px;
    font-family: "Liberation Serif", serif;
    font-size: 59px;
    font-weight: 400;
    line-height: 70px;
    color: #fff;
}
.chart {
    display: grid;
    grid-template-columns: 276px 967px;
    gap: 21px 22px;
    align-items: center;
    padding-top: 81px;
}
.label {
    text-align: right;
    font-size: 19px;
    font-weight: 700;
    color: #fff;
}
.bar {
    height: 66px;
    padding-right: 22px;
    background: #0c2748;
    font-family: "Liberation Serif", serif;
    font-size: 36px;
    line-height: 66px;
    text-align: right;
    color: #fff;
}
.teal {
    background: #16364a;
}

/* dock */
.dock {
    flex: none;
    display: flex;
    align-items: center;
    gap: 14px;
    height: 78px;
    margin: 5px auto 10px;
    padding: 0 14px 6px 11px;
    border: 2px solid #7c8fb2;
    border-radius: 20px;
    background: linear-gradient(90deg, #56678e, #577aa6);
}
.app {
    position: relative;
    width: 46px;
    height: 46px;
}
.app.running::after {
    content: "";
    position: absolute;
    left: 20px;
    top: 55px;
    width: 6px;
    height: 6px;
    border-radius: 50%;
    background: #040b26;
}
.badge {
    position: absolute;
    top: -8px;
    right: -7px;
    width: 22px;
    height: 26px;
    border-radius: 13px;
    background: #f23c34;
    font-size: 13px;
    line-height: 26px;
    color: #fff;
}
.separator {
    width: 2px;
    height: 68px;
    margin: 0 5px;
    background: #21477a;
}
.thumb-window {
    display: flex;
    align-items: center;
    width: auto;
    margin-right: -6px;
}
.trash {
    display: flex;
    align-items: center;
    width: 40px;
    margin-left: 8px;
}
.office-letter {
    font-size: 14px;
    font-weight: 700;
    text-anchor: middle;
    fill: #fff;
}
.cal-month {
    font-size: 9px;
    font-weight: 600;
    text-anchor: middle;
    fill: #fff;
}
.cal-day {
    font-size: 26px;
    font-weight: 300;
    text-anchor: middle;
    fill: #222;
}
.tv {
    font-size: 19px;
    font-weight: 500;
    fill: #fff;
}
```
